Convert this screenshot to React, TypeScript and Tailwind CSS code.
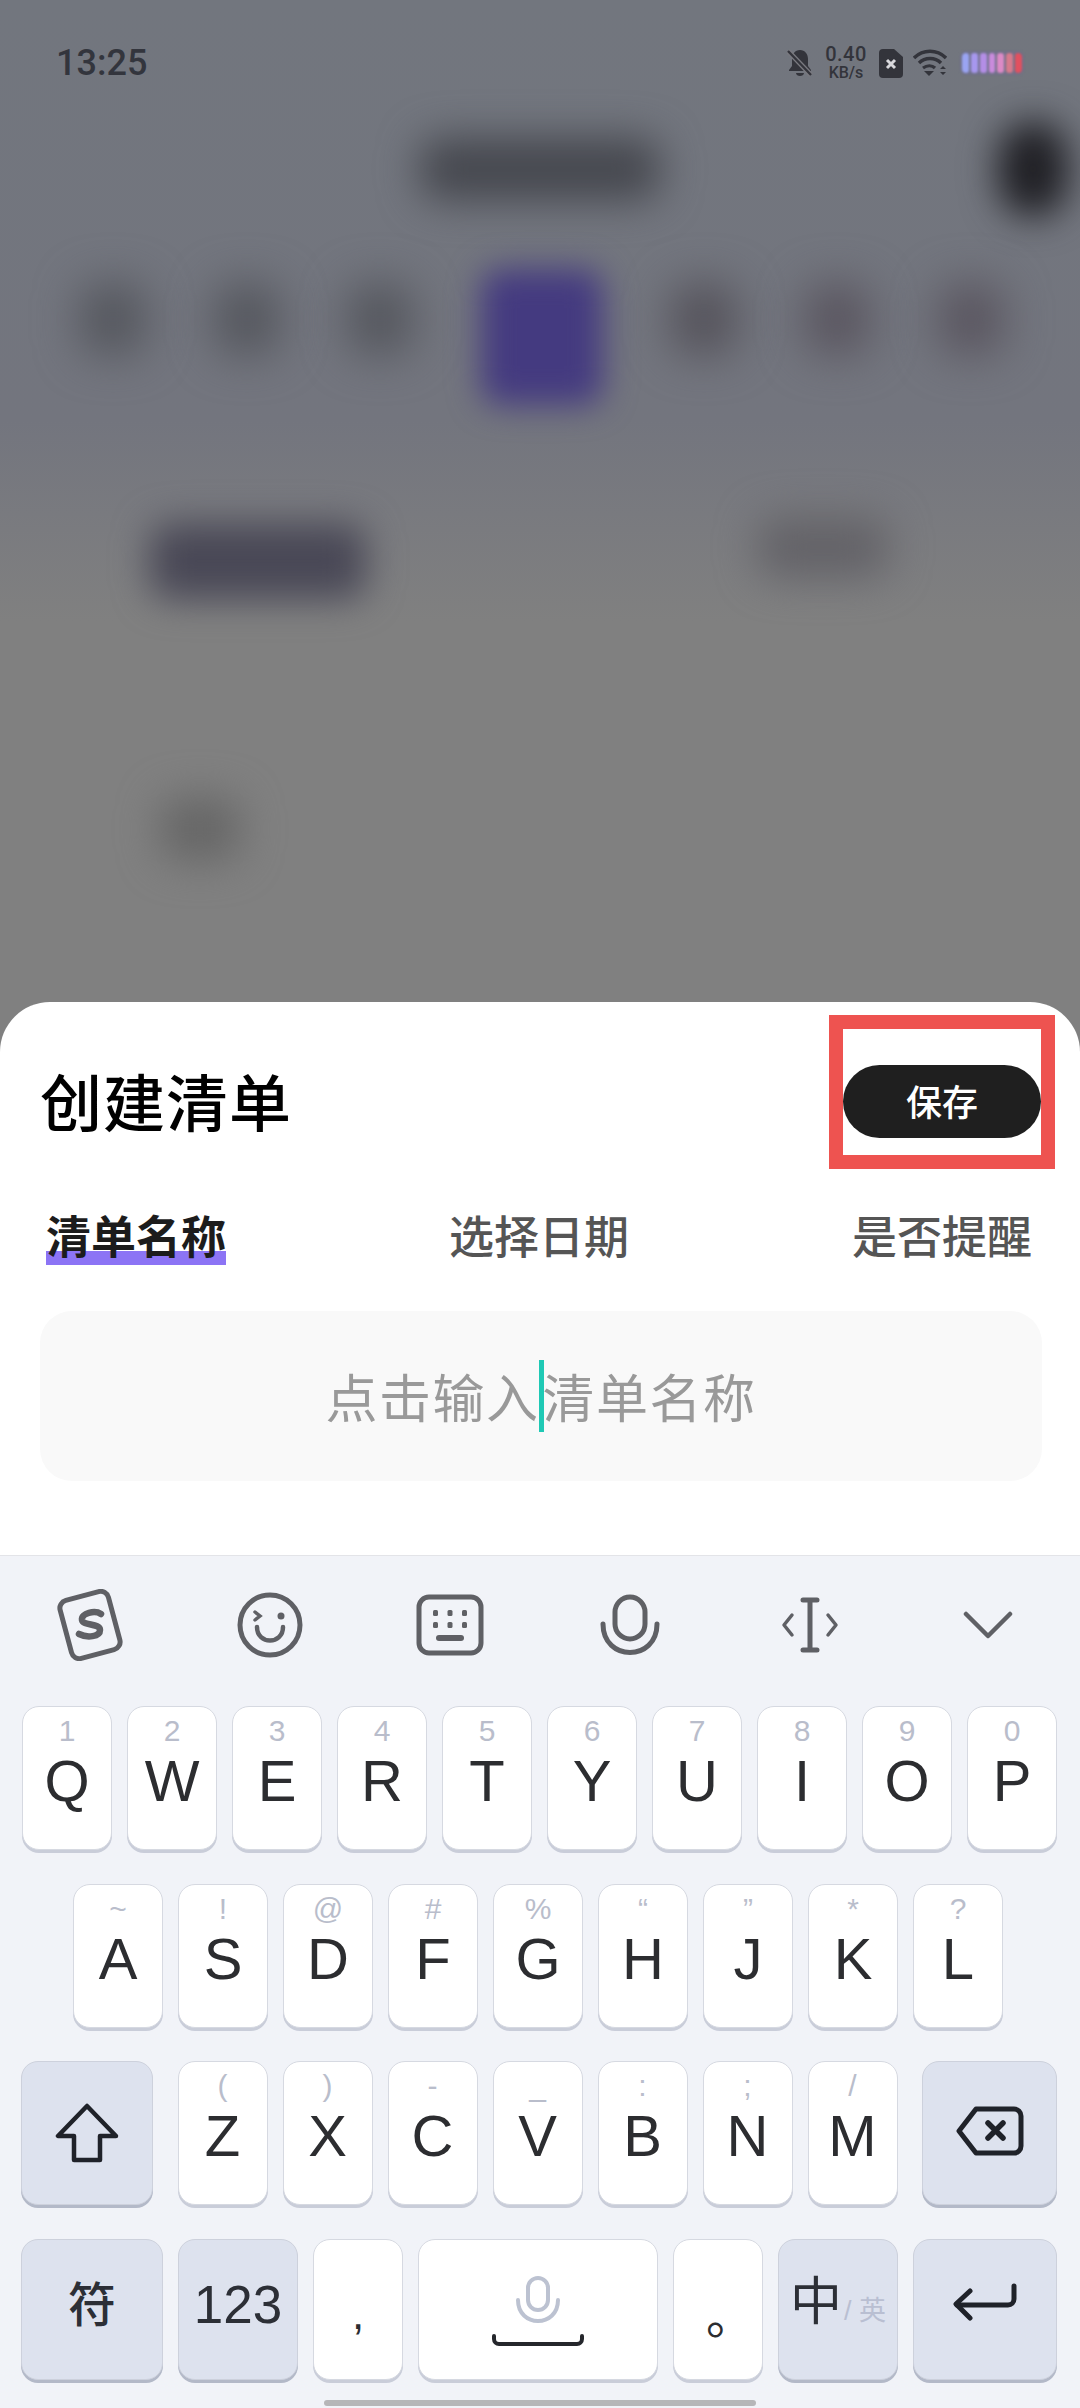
const latin = "font-['Liberation_Sans','Noto_Sans_CJK_SC',sans-serif]";

function Key({
  width = "w-[90px]",
  height = "h-[144px]",
  dark = false,
  className = "",
  children,
}: {
  width?: string;
  height?: string;
  dark?: boolean;
  className?: string;
  children: React.ReactNode;
}) {
  return (
    <div
      className={`${width} ${height} shrink-0 rounded-[17px] border ${
        dark
          ? "border-[#cdd1dc] bg-[#dde2ee] shadow-[0_3px_0_#b3b9c8]"
          : "border-[#d6d9e1] bg-white shadow-[0_3px_0_#c9cdd9]"
      } ${className}`}
    >
      {children}
    </div>
  );
}

function LetterKey({ letter, sub }: { letter: string; sub: string }) {
  return (
    <Key className="flex flex-col items-center pt-[6px]">
      <span className="h-[36px] text-[30px] leading-[36px] text-[#b9bdcb]">{sub}</span>
      <span className="mt-[3px] text-[58px] leading-[58px] text-[#2c2d30]">{letter}</span>
    </Key>
  );
}

function Blob({ className }: { className: string }) {
  return <div className={`shrink-0 rounded-[20px] ${className}`} />;
}

function StatusIcons() {
  return (
    <div className="flex items-center text-[#33343b]">
      {/* muted bell */}
      <svg width="26" height="28" viewBox="0 0 26 28" className="mr-[10px]">
        <path d="M13 1c5 0 8 4 8 9v7l3 4v1H2v-1l3-4v-7c0-5 3-9 8-9zM9 24h8c0 2-2 3-4 3s-4-1-4-3z" fill="#33343b" />
        <path d="M1 2l23 24" stroke="#7a7a80" strokeWidth="5" />
        <path d="M1 2l23 24" stroke="#33343b" strokeWidth="2.4" />
      </svg>
      <div className="mr-[10px] flex w-[46px] flex-col items-center font-['Roboto',sans-serif] font-medium">
        <span className="text-[20px] leading-[19px] tracking-[0.5px]">0.40</span>
        <span className="text-[16px] leading-[17px]">KB/s</span>
      </div>
      {/* sim */}
      <svg width="24" height="29" viewBox="0 0 24 29" className="mr-[10px]">
        <path d="M4 0h11l9 8v17a4 4 0 0 1-4 4H4a4 4 0 0 1-4-4V4a4 4 0 0 1 4-4z" fill="#33343b" />
        <path d="M8 11l8 8M16 11l-8 8" stroke="#d8d8dc" strokeWidth="3" />
      </svg>
      {/* wifi */}
      <svg width="34" height="28" viewBox="0 0 34 28" fill="none" stroke="#33343b" className="mr-[13px]">
        <path d="M1 9c9-9 23-9 32 0" strokeWidth="3.4" />
        <path d="M6 14c6-6 16-6 22 0" strokeWidth="3.4" />
        <path d="M10 19c4-3 9-3 12 0" strokeWidth="3.2" />
        <path d="M11 22h10l-5 5z" fill="#33343b" stroke="none" />
        <path d="M27 20l3-3 3 3zM27 23h6l-3 3z" fill="#33343b" stroke="none" />
      </svg>
      {/* battery */}
      <div className="flex h-[24px] w-[64px] gap-[2px] overflow-hidden rounded-[6px] border-2 border-[#6f7088] bg-[#6f7088] blur-[1px]">
        <div className="flex-1 rounded-[3px] bg-[#9aa4f2]" />
        <div className="flex-1 rounded-[3px] bg-[#a797ee]" />
        <div className="flex-1 rounded-[3px] bg-[#b48ee6]" />
        <div className="flex-1 rounded-[3px] bg-[#c98bdc]" />
        <div className="flex-1 rounded-[3px] bg-[#dc8ac6]" />
        <div className="flex-1 rounded-[3px] bg-[#d77a8c]" />
        <div className="flex-1 rounded-[3px] bg-[#e2505f]" />
      </div>
    </div>
  );
}

function Backdrop() {
  return (
    <div className="h-[1002px] overflow-hidden bg-[linear-gradient(180deg,#72767e_0%,#73757e_42%,#808080_62%,#808080_100%)]">
      {/* status bar */}
      <div className="flex h-[122px] items-center justify-between pt-[4px] pr-[56px] pl-[56px]">
        <span className="font-['Roboto',sans-serif] text-[36px] font-medium text-[#33353d]">13:25</span>
        <StatusIcons />
      </div>

      {/* blurred page behind the sheet */}
      <div className="flex h-[93px] items-center pl-[420px]">
        <Blob className="h-[62px] w-[240px] bg-[#45474e] blur-[20px]" />
        <Blob className="ml-[338px] h-[96px] w-[70px] rounded-full bg-[#202025] blur-[18px]" />
      </div>
      <div className="mt-[48px] flex h-[147px] items-center justify-between pr-[76px] pl-[80px]">
        <Blob className="mb-[36px] h-[72px] w-[66px] bg-[#55575e] blur-[22px]" />
        <Blob className="mb-[36px] h-[72px] w-[66px] bg-[#55575e] blur-[22px]" />
        <Blob className="mb-[36px] h-[72px] w-[66px] bg-[#55575e] blur-[22px]" />
        <Blob className="h-[136px] w-[122px] bg-[#443a80] blur-[16px]" />
        <Blob className="mb-[36px] h-[72px] w-[66px] bg-[#55535b] blur-[22px]" />
        <Blob className="mb-[36px] h-[72px] w-[66px] bg-[#5a5660] blur-[22px]" />
        <Blob className="mb-[36px] h-[72px] w-[66px] bg-[#5a5660] blur-[22px]" />
      </div>
      <div className="mt-[113px] flex items-start pl-[150px]">
        <Blob className="h-[76px] w-[216px] bg-[#494856] blur-[18px]" />
        <Blob className="-mt-[6px] ml-[392px] h-[60px] w-[130px] bg-[#636267] blur-[20px]" />
      </div>
      <div className="mt-[198px] pl-[160px]">
        <Blob className="h-[64px] w-[80px] bg-[#666666] blur-[20px]" />
      </div>
    </div>
  );
}

function Sheet() {
  return (
    <div className="h-[553px] rounded-t-[50px] bg-white pt-[13px]">
      <div className="flex items-start justify-between pr-[25px] pl-[40px]">
        <h1 className="mt-[47px] text-[62px] leading-[76px] font-medium tracking-[1px] text-black">创建清单</h1>
        <div className="h-[154px] w-[226px] border-[14px] border-[#ee5350] pt-[36px]">
          <button className="h-[73px] w-full rounded-full bg-[#1f1f1f] pb-[2px] text-[36px] leading-[71px] font-medium text-white">保存</button>
        </div>
      </div>

      <div className="mt-[38px] flex items-start justify-between pr-[48px] pl-[46px] text-[45px] leading-[56px] font-medium">
        <div className="relative font-bold text-[#1c1c1c]">
          <span className="relative z-10">清单名称</span>
          <div className="absolute right-0 bottom-[-2px] left-0 h-[14px] bg-[#8c74f5]" />
        </div>
        <span className="text-[#555555]">选择日期</span>
        <span className="text-[#555555]">是否提醒</span>
      </div>

      <div className="mx-[40px] mt-[48px] flex h-[170px] w-[1002px] items-center justify-center rounded-[32px] bg-[#f9f9f9] text-[52px] tracking-[1.5px] text-[#999999]">
        <span>点击输入</span>
        <div className="relative z-10 -mx-[1px] h-[72px] w-[5px] bg-[#1fc9b5]" />
        <span>清单名称</span>
      </div>
    </div>
  );
}

function Toolbar() {
  return (
    <div className="grid h-[150px] grid-cols-6 place-items-center pb-[12px] text-[#5f6065]">
      <svg width="72" height="72" viewBox="0 0 72 72" fill="none" stroke="currentColor">
        <rect x="11" y="6" width="50" height="60" rx="8" strokeWidth="5" transform="rotate(-15 36 36)" />
        <path d="M47 25c-6-4-20-1-19 6 1 6 18 3 18 10 0 7-13 8-21 4" strokeWidth="6.5" strokeLinecap="round" />
      </svg>
      <svg width="68" height="68" viewBox="0 0 68 68" fill="none" stroke="currentColor" strokeLinecap="round">
        <circle cx="34" cy="34" r="30" strokeWidth="5" />
        <path d="M19 21l5 4-5 4" strokeWidth="3.5" />
        <circle cx="45" cy="25" r="3.5" fill="currentColor" stroke="none" />
        <path d="M21 36c0 18 26 18 26 0" strokeWidth="4.5" />
      </svg>
      <svg width="68" height="62" viewBox="0 0 68 62" fill="none" stroke="currentColor">
        <rect x="3" y="3" width="62" height="56" rx="10" strokeWidth="5" />
        <g fill="currentColor" stroke="none">
          <rect x="17" y="16" width="5" height="6" rx="1.5" />
          <rect x="31.500" y="16" width="5" height="6" rx="1.5" />
          <rect x="46" y="16" width="5" height="6" rx="1.5" />
          <rect x="17" y="28" width="5" height="6" rx="1.5" />
          <rect x="31.500" y="28" width="5" height="6" rx="1.5" />
          <rect x="46" y="28" width="5" height="6" rx="1.5" />
          <rect x="20" y="41" width="28" height="6" rx="3" />
        </g>
      </svg>
      <svg width="60" height="62" viewBox="0 0 60 62" fill="none" stroke="currentColor" strokeLinecap="round">
        <rect x="15" y="3" width="30" height="42" rx="15" strokeWidth="5" />
        <path d="M3 30c0 38 54 38 54 0" strokeWidth="5" />
      </svg>
      <svg width="60" height="56" viewBox="0 0 60 56" fill="none" stroke="currentColor" strokeLinecap="round" strokeLinejoin="round">
        <path d="M30 4v48M23 3h14M23 53h14" strokeWidth="5" />
        <path d="M12 18l-8 10 8 10M48 18l8 10-8 10" strokeWidth="3.5" />
      </svg>
      <svg width="50" height="28" viewBox="0 0 50 28" fill="none" stroke="currentColor" strokeLinecap="round" strokeLinejoin="round" className="-ml-[4px]">
        <path d="M3 3l22 22L47 3" strokeWidth="4.5" />
      </svg>
    </div>
  );
}

function Keyboard() {
  const row1 = [
    ["Q", "1"], ["W", "2"], ["E", "3"], ["R", "4"], ["T", "5"],
    ["Y", "6"], ["U", "7"], ["I", "8"], ["O", "9"], ["P", "0"],
  ];
  const row2 = [
    ["A", "~"], ["S", "!"], ["D", "@"], ["F", "#"], ["G", "%"],
    ["H", "“"], ["J", "”"], ["K", "*"], ["L", "?"],
  ];
  const row3 = [
    ["Z", "("], ["X", ")"], ["C", "-"], ["V", "_"], ["B", ":"], ["N", ";"], ["M", "/"],
  ];

  return (
    <div className={`h-[853px] border-t border-[#e3e4e8] bg-[#f1f3f8] ${latin}`}>
      <Toolbar />

      <div className="flex gap-[15px] pl-[22px]">
        {row1.map(([l, s]) => (
          <LetterKey key={l} letter={l} sub={s} />
        ))}
      </div>

      <div className="mt-[34px] flex gap-[15px] pl-[73px]">
        {row2.map(([l, s]) => (
          <LetterKey key={l} letter={l} sub={s} />
        ))}
      </div>

      <div className="mt-[33px] flex items-start justify-between pr-[23px] pl-[21px]">
        <Key dark width="w-[132px]" className="flex items-center justify-center">
          <svg width="64" height="60" viewBox="0 0 64 60" fill="none" stroke="#1f2229" strokeWidth="4.5" strokeLinejoin="round">
            <path d="M32 3L3 33h16v24h26V33h16z" />
          </svg>
        </Key>
        <div className="flex gap-[15px]">
          {row3.map(([l, s]) => (
            <LetterKey key={l} letter={l} sub={s} />
          ))}
        </div>
        <Key dark width="w-[135px]" className="flex items-center justify-center pb-[5px]">
          <svg width="68" height="50" viewBox="0 0 68 50" fill="none" stroke="#1f2229" strokeWidth="5" strokeLinejoin="round" strokeLinecap="round">
            <path d="M20 3h38a7 7 0 0 1 7 7v30a7 7 0 0 1-7 7H20L3 25z" />
            <path d="M32 17l15 15M47 17L32 32" strokeWidth="5.500" />
          </svg>
        </Key>
      </div>

      <div className="mt-[34px] flex gap-[15px] pl-[21px]">
        <Key dark width="w-[142px]" height="h-[141px]" className="flex items-center justify-center pb-[8px]">
          <span className="text-[48px] font-medium text-[#2c2f36]">符</span>
        </Key>
        <Key dark width="w-[120px]" height="h-[141px]" className="flex items-center justify-center pb-[10px]">
          <span className="text-[53px] text-[#2c2f36]">123</span>
        </Key>
        <Key height="h-[141px]" className="flex justify-center pt-[44px]">
          <span className="text-[44px] leading-[60px] text-[#2c2d30]">,</span>
        </Key>
        <Key width="w-[240px]" height="h-[141px]" className="flex flex-col items-center pt-[36px]">
          <svg width="44" height="50" viewBox="0 0 44 50" fill="none" stroke="#bcc2d1" strokeLinecap="round">
            <rect x="12" y="2" width="20" height="32" rx="10" strokeWidth="4" />
            <path d="M2 24c0 28 40 28 40 0" strokeWidth="4" />
          </svg>
          <svg width="92" height="12" viewBox="0 0 92 12" fill="none" stroke="#25272c" strokeWidth="4" strokeLinecap="round" strokeLinejoin="round" className="mt-[8px]">
            <path d="M2 2v3a5 5 0 0 0 5 5h78a5 5 0 0 0 5-5V2" />
          </svg>
        </Key>
        <Key height="h-[141px]" className="flex justify-center pt-[43px] pl-[24px] font-['Noto_Sans_CJK_SC',sans-serif]">
          <span className="text-[48px] leading-[60px] text-[#2c2d30]">。</span>
        </Key>
        <Key dark width="w-[120px]" height="h-[141px]" className="flex items-center pb-[16px] pl-[11px]">
          <span className="text-[52px] leading-[60px] text-[#2c2f36]">中</span>
          <span className="mt-[18px] ml-[2px] text-[27px] leading-[40px] text-[#b9bfd2]">/ 英</span>
        </Key>
        <Key dark width="w-[144px]" height="h-[141px]" className="flex items-center justify-center pb-[16px]">
          <svg width="64" height="38" viewBox="0 0 64 38" fill="none" stroke="#1f2229" strokeWidth="5" strokeLinejoin="round" strokeLinecap="round">
            <path d="M61 3v13a6 6 0 0 1-6 6H4" />
            <path d="M17 8L3 21l14 14" />
          </svg>
        </Key>
      </div>

      <div className="mt-[20px] ml-[324px] h-[6px] w-[432px] rounded-full bg-[#b6b6b8]" />
    </div>
  );
}

export default function App() {
  return (
    <div className="h-[2408px] w-[1080px] overflow-hidden bg-[#808080] font-['Noto_Sans_CJK_SC',sans-serif]">
      <Backdrop />
      <Sheet />
      <Keyboard />
    </div>
  );
}
